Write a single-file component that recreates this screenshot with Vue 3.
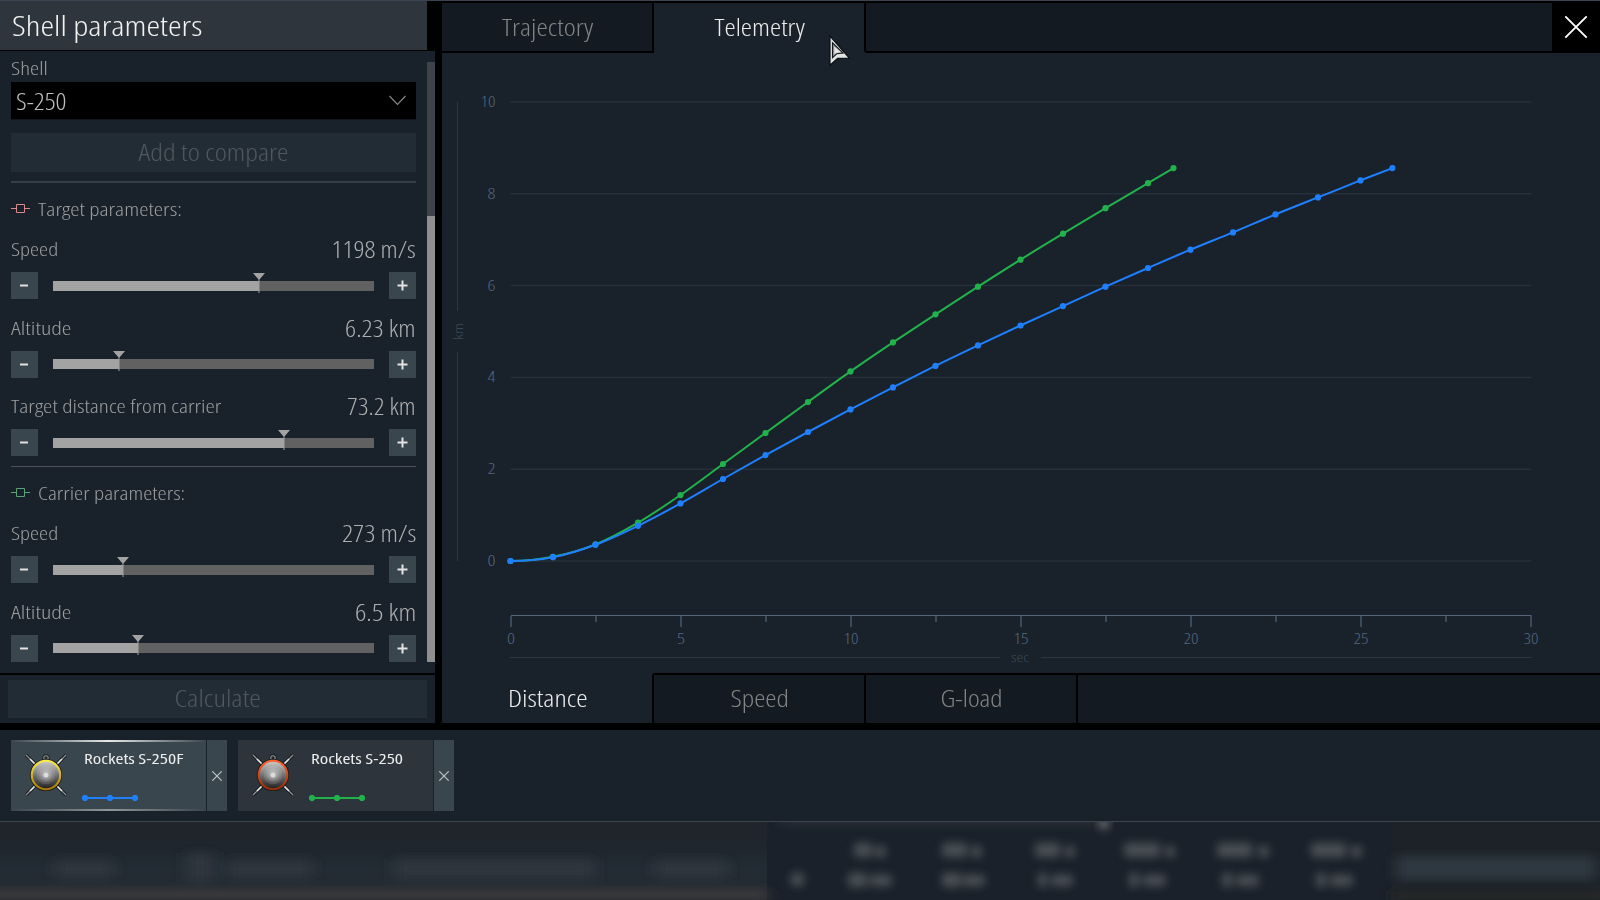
<template>
  <div class="screen">
    <div class="window">
      <aside class="panel">
        <h1 class="panel-title"><span v-fit="190" class="left">Shell parameters</span></h1>
        <div class="panel-body">
          <div class="form">
            <label class="label shell-label"><span v-fit="37" class="left">Shell</span></label>
            <div class="select">
              <span v-fit="50" class="left">S-250</span>
              <svg width="18" height="11" viewBox="0 0 18 11" fill="none" stroke="#858585" stroke-width="1.2">
                <path d="M.5 1l8 8.3L16.5 1" />
              </svg>
            </div>
            <button class="disabled-btn compare"><span v-fit="150">Add to compare</span></button>
            <section v-for="group in groups" :key="group.title" class="group">
              <div class="group-title label">
                <svg width="19" height="11" viewBox="0 0 19 11" fill="none" :stroke="group.color">
                  <path d="M0 5.5h5M14 5.5h5M5.5 1.5h8v8h-8z" />
                </svg>
                <span v-fit="group.width" class="left">{{ group.title }}</span>
              </div>
              <div v-for="p in group.params" :key="p.name" class="param">
                <div class="param-head">
                  <span v-fit="p.nameWidth" class="label left">{{ p.name }}</span>
                  <span v-fit="p.valueWidth" class="value right">{{ p.value }}</span>
                </div>
                <div class="slider">
                  <button class="step">
                    <svg width="27" height="27" stroke="#e2e2e2" stroke-width="2"><path d="M9 13.5h8" /></svg>
                  </button>
                  <div class="track">
                    <div class="fill" :style="{ width: p.pos + '%' }">
                      <svg class="thumb" width="12" height="21"><path d="M0 0h12L6.5 6.5V20h-1V6.5z" fill="#a3a3a3" /></svg>
                    </div>
                  </div>
                  <button class="step">
                    <svg width="27" height="27" stroke="#e2e2e2" stroke-width="2"><path d="M8.5 13.5h10M13.5 8.5v10" /></svg>
                  </button>
                </div>
              </div>
            </section>
          </div>
          <div class="scrollbar"><div class="scroll-thumb"></div></div>
        </div>
        <div class="panel-foot">
          <button class="disabled-btn calculate"><span v-fit="87">Calculate</span></button>
        </div>
      </aside>

      <main class="main">
        <nav class="tabs top">
          <div v-for="tab in topTabs" :key="tab.name" class="tab" :class="{ active: tab.active }">
            <span v-fit="tab.width">{{ tab.name }}</span>
          </div>
          <div class="tab-rest"></div>
          <button class="close">
            <svg width="24" height="24" stroke="#fff" stroke-width="1.9"><path d="M1.3 1.3l21.4 21.4M22.7 1.3L1.3 22.7" /></svg>
          </button>
        </nav>

        <svg class="chart" width="1158" height="620" viewBox="442 53 1158 620">
          <g class="grid">
            <path v-for="n in 6" :key="n" :d="`M510.5 ${yAt((n - 1) * 2)}H1531.5`" />
          </g>
          <g class="frame">
            <path d="M457.5 102V311M457.5 352V561" />
            <path d="M510 657.5H1000M1041 657.5H1531.5" />
          </g>
          <g class="axis-text">
            <text
              v-for="n in 6" :key="n" :x="n === 6 ? 480.5 : 487.5" :y="yAt((n - 1) * 2) + 5"
              :textLength="n === 6 ? 15 : 8" lengthAdjust="spacingAndGlyphs"
            >{{ (n - 1) * 2 }}</text>
            <text
              v-for="n in 7" :key="'x' + n" :x="xAt((n - 1) * 5) - (n > 2 ? 7.5 : 4)" y="644.3"
              :textLength="n > 2 ? 15 : 8" lengthAdjust="spacingAndGlyphs"
            >{{ (n - 1) * 5 }}</text>
          </g>
          <g class="unit-text">
            <text x="1011" y="662" textLength="18" lengthAdjust="spacingAndGlyphs">sec</text>
            <text transform="translate(463 340) rotate(-90)" textLength="17" lengthAdjust="spacingAndGlyphs">km</text>
          </g>
          <path class="ticks" :d="ticks" />
          <path class="axis" d="M511 615.5H1531.5" />
          <g v-for="s in series" :key="s.color" :fill="s.color">
            <path :d="curve(s.points)" fill="none" :stroke="s.color" stroke-width="2" />
            <circle v-for="(p, i) in s.points" :key="i" :cx="p[0]" :cy="p[1]" r="3.1" />
          </g>
        </svg>

        <nav class="tabs bottom">
          <div v-for="tab in bottomTabs" :key="tab.name" class="tab" :class="{ active: tab.active }">
            <span v-fit="tab.width">{{ tab.name }}</span>
          </div>
          <div class="tab-rest"></div>
        </nav>
      </main>
    </div>

    <footer class="shells">
      <div v-for="shell in shells" :key="shell.name" class="shell" :class="{ selected: shell.selected }">
        <div class="card">
          <svg class="rocket" width="42" height="44" viewBox="0 0 42 44">
            <defs>
              <linearGradient :id="shell.id + 'ring'" x2="0" y2="1">
                <stop offset="0" :stop-color="shell.ring[0]" />
                <stop offset="1" :stop-color="shell.ring[1]" />
              </linearGradient>
              <linearGradient :id="shell.id + 'nose'" x2="0" y2="1">
                <stop offset="0" stop-color="#c9c9c9" />
                <stop offset=".5" stop-color="#727272" />
                <stop offset="1" stop-color="#242424" />
              </linearGradient>
            </defs>
            <path d="M1 2l40 40M41 2L1 42" stroke="#151b20" stroke-width="3.2" />
            <path d="M1 2l40 40M41 2L1 42" stroke="#8d9293" stroke-width="1.3" />
            <path d="M5 6l6 6M31 32l6 6M37 6l-6 6M11 32l-6 6" stroke="#e8eaea" stroke-width="1.5" />
            <circle cx="21" cy="5" r="2.2" fill="none" stroke="#1b2024" stroke-width="3" />
            <circle cx="21" cy="5" r="2.2" fill="none" stroke="#8d9193" stroke-width="1.1" />
            <circle cx="21" cy="22" r="16.1" fill="#1b1d1e" />
            <circle cx="21" cy="22" r="15.3" :fill="`url(#${shell.id}ring)`" />
            <circle cx="21" cy="22" r="13.2" :fill="`url(#${shell.id}nose)`" />
            <circle cx="21" cy="22" r="9.3" fill="#fff" fill-opacity=".12" />
            <circle cx="21" cy="22" r="6.8" fill="#fff" fill-opacity=".14" />
            <circle cx="21" cy="22" r="4.7" fill="#fff" fill-opacity=".16" />
            <circle cx="21" cy="22" r="2.5" fill="#dcdcdc" />
          </svg>
          <div class="info">
            <span v-fit="shell.width" class="shell-name left">{{ shell.name }}</span>
            <svg width="58" height="8" :fill="shell.color" :stroke="shell.color">
              <path d="M4 4h50" stroke-width="2" />
              <circle v-for="x in [4, 29, 54]" :key="x" :cx="x" cy="4" r="2.7" />
            </svg>
          </div>
        </div>
        <button class="remove">
          <svg width="10" height="10" stroke="#c3c8ca" stroke-width="1.1"><path d="M.3.3l9.4 9.4M9.7.3L.3 9.7" /></svg>
        </button>
      </div>
    </footer>

    <svg class="backdrop" width="1600" height="78" viewBox="0 822 1600 78">
      <defs>
        <filter id="soft" x="-10%" y="-60%" width="120%" height="220%"><feGaussianBlur stdDeviation="7 5" /></filter>
        <filter id="soft-text" x="-10%" y="-60%" width="120%" height="220%"><feGaussianBlur stdDeviation="4" /></filter>
        <linearGradient id="haze" x2="0" y2="1">
          <stop offset="0" stop-color="#21242a" />
          <stop offset=".35" stop-color="#1f262e" />
          <stop offset=".6" stop-color="#232c34" />
          <stop offset="1" stop-color="#23282f" />
        </linearGradient>
      </defs>
      <rect y="822" width="1600" height="78" fill="#1a212a" />
      <rect y="822" width="767" height="78" fill="url(#haze)" />
      <rect x="1392" y="822" width="208" height="78" fill="#1c2228" />
      <g filter="url(#soft)">
        <rect x="-20" y="890" width="788" height="9" fill="#403e3e" />
        <path d="M55 860h58v18H55zM186 853h28v29h-28zM228 860h84v18h-84zM394 859h200v20H394zM655 860h72v18h-72z" fill="#2d363e" />
        <rect x="1396" y="856" width="200" height="24" fill="#2f3840" />
        <rect x="1390" y="893" width="220" height="6" fill="#2a2928" />
        <rect x="780" y="820" width="320" height="4" fill="#343b41" />
      </g>
      <path d="M1096 820h16l-8 11z" fill="#74777b" filter="url(#soft-text)" />
      <g class="blurred" filter="url(#soft-text)">
        <rect v-for="b in blurs" :key="b.join()" :x="b[0]" :y="b[1]" :width="b[2]" :height="b[3]" rx="3" />
      </g>
    </svg>

    <svg class="cursor" width="24" height="34" viewBox="0 0 24 34">
      <path d="M2 2v29.3l7.6-7L21.3 24z" fill="#e2e4e4" stroke="#0c0f12" stroke-width="1.2" />
      <path d="M4.5 8.8v15L8.6 19.8l6.6-.8z" fill="#8f9192" stroke="#14181b" stroke-width="1.1" />
      <path d="M6.3 12.5v8l2.2-1.6 4.6-.7z" fill="#e4e6e6" />
    </svg>
  </div>
</template>

<script setup>
// squeeze a label horizontally to the given width, the UI face is a condensed one
const vFit = {
  mounted(el, { value }) {
    el.style.transform = `scaleX(${value / el.offsetWidth})`;
  },
};

const groups = [
  {
    title: "Target parameters:",
    width: 144,
    color: "#d98a88",
    params: [
      { name: "Speed", nameWidth: 47, value: "1198 m/s", valueWidth: 84.5, pos: 64.2 },
      { name: "Altitude", nameWidth: 61, value: "6.23 km", valueWidth: 71, pos: 20.5 },
      { name: "Target distance from carrier", nameWidth: 211, value: "73.2 km", valueWidth: 69, pos: 71.9 },
    ],
  },
  {
    title: "Carrier parameters:",
    width: 147,
    color: "#5aa377",
    params: [
      { name: "Speed", nameWidth: 47, value: "273 m/s", valueWidth: 74, pos: 21.9 },
      { name: "Altitude", nameWidth: 61, value: "6.5 km", valueWidth: 61, pos: 26.5 },
    ],
  },
];

const topTabs = [
  { name: "Trajectory", width: 91 },
  { name: "Telemetry", width: 91, active: true },
];
const bottomTabs = [
  { name: "Distance", width: 79, active: true },
  { name: "Speed", width: 58 },
  { name: "G-load", width: 62 },
];

const shells = [
  { id: "a", name: "Rockets S-250F", width: 99, color: "#1f80ff", ring: ["#fff04a", "#a87500"], selected: true },
  { id: "b", name: "Rockets S-250", width: 92.5, color: "#22b24c", ring: ["#ff6430", "#962c08"] },
];

const xAt = (t) => 511 + t * 34;
const yAt = (km) => 561 - km * 45.9;

const ticks = Array.from({ length: 13 }, (_, i) => `M${xAt(i * 2.5)} 616v${i % 2 ? 6 : 11}`).join("");

const toPoints = (ys, lastX) =>
  ys.map((y, i) => [i === ys.length - 1 ? lastX : 510.5 + i * 42.5, y]);

const series = [
  {
    color: "#22b24c",
    points: toPoints(
      [561, 556.8, 544.4, 522.7, 495, 464, 433, 402, 371.4, 342.4, 314.3, 286.7, 259.7, 233.7, 208.2, 183.2, 168.1],
      1173.5
    ),
  },
  {
    color: "#1f80ff",
    points: toPoints(
      [
        561, 557.2, 544.7, 525.8, 503.4, 479, 455.1, 432, 409.4, 387.4, 365.9, 345.4, 325.5, 306.1, 286.7, 268,
        249.7, 232.4, 214.4, 197.4, 180.4, 168.1,
      ],
      1392.4
    ),
  },
];

// Catmull-Rom through the samples, mirrored at launch so the curve starts flat
function curve(pts) {
  let d = `M${pts[0]}`;
  for (let i = 0; i < pts.length - 1; i++) {
    const p1 = pts[i];
    const p2 = pts[i + 1];
    const p0 = pts[i - 1] || [2 * p1[0] - p2[0], p2[1]];
    const p3 = pts[i + 2] || p2;
    d += `C${p1[0] + (p2[0] - p0[0]) / 6} ${p1[1] + (p2[1] - p0[1]) / 6} `;
    d += `${p2[0] - (p3[0] - p1[0]) / 6} ${p2[1] - (p3[1] - p1[1]) / 6} ${p2}`;
  }
  return d;
}

const blurs = [
  [791, 873, 13, 13],
  [854, 843, 18, 14], [875, 846, 11, 11],
  [848, 873, 19, 14], [870, 875, 22, 11],
  [942, 843, 25, 14], [971, 846, 11, 11],
  [942, 873, 19, 14], [963, 875, 22, 11],
  [1035, 843, 25, 14], [1065, 846, 10, 11],
  [1038, 873, 9, 14], [1051, 875, 22, 11],
  [1124, 843, 36, 14], [1165, 846, 10, 11],
  [1129, 873, 10, 14], [1143, 875, 23, 11],
  [1217, 843, 35, 14], [1258, 846, 11, 11],
  [1222, 873, 10, 14], [1236, 875, 23, 11],
  [1311, 843, 35, 14], [1351, 846, 11, 11],
  [1316, 873, 10, 14], [1330, 875, 23, 11],
];
</script>

<style>
body {
  margin: 0;
  background: #000;
}
</style>

<style scoped>
.screen {
  position: relative;
  width: 1600px;
  height: 900px;
  overflow: hidden;
  background: #000202;
  font-family: "Open Sans", "Noto Sans", sans-serif;
  font-weight: 300;
  font-stretch: 75%;
  color: #a9abad;
}
svg {
  display: block;
  flex: none;
}
button {
  border: 0;
  padding: 0;
  font: inherit;
  color: inherit;
}
span {
  display: inline-block;
  white-space: nowrap;
}
.left {
  transform-origin: 0 50%;
}
.right {
  transform-origin: 100% 50%;
}
.window {
  display: flex;
  gap: 7px;
  height: 722px;
  border-top: 1px solid #3b4552;
}
.panel {
  width: 435px;
  display: flex;
  flex-direction: column;
}
.panel-title {
  box-sizing: border-box;
  width: 427px;
  height: 49px;
  margin: 0 0 1px;
  padding-left: 11.5px;
  background: #2f353c;
  color: #f2f2f2;
  font-size: 28px;
  font-weight: 300;
  line-height: 48px;
}
.panel-body {
  height: 622px;
  display: flex;
  justify-content: space-between;
  background: #19212a;
}
.form {
  width: 405px;
  padding-left: 11px;
}
.label {
  font-size: 17.5px;
  font-weight: 360;
  color: #9c9e9f;
}
.shell-label {
  display: block;
  height: 27px;
  padding-top: 4px;
  line-height: 27px;
}
.select {
  height: 37px;
  display: flex;
  align-items: center;
  justify-content: space-between;
  padding: 0 9px 0 5px;
  background: #000;
  color: #bfc0c0;
  font-size: 23px;
  border-bottom: 1px solid #10161b;
}
.disabled-btn {
  box-sizing: border-box;
  display: flex;
  align-items: center;
  justify-content: center;
  padding-bottom: 2px;
  background: #222c34;
  color: #50575f;
  font-size: 23px;
}
.compare {
  width: 405px;
  height: 39px;
  margin: 13px 0 9px;
}
.group {
  border-top: 2px solid #363e47;
}
.group + .group {
  border-top: 1px solid #4d5359;
}
.group-title {
  display: flex;
  align-items: center;
  gap: 8px;
  height: 51px;
  margin-bottom: 1px;
}
.param {
  margin-bottom: 14.5px;
}
.param:last-child {
  margin-bottom: 10px;
}
.param-head {
  display: flex;
  justify-content: space-between;
  align-items: center;
  height: 28px;
}
.value {
  font-size: 23px;
  color: #adafb1;
}
.slider {
  display: flex;
  align-items: center;
  justify-content: space-between;
  margin-top: 9px;
}
.step {
  width: 27px;
  height: 27px;
  background: #3a464e;
}
.track {
  width: 321px;
  height: 10px;
  background: #616161;
}
.fill {
  position: relative;
  height: 10px;
  background: #a3a3a3;
}
.thumb {
  position: absolute;
  right: -6px;
  top: -8px;
}
.scrollbar {
  width: 8px;
  height: 600px;
  margin-top: 11px;
  background: #3f4248;
}
.scroll-thumb {
  height: 446px;
  margin-top: 154px;
  background: #8f8f8f;
}
.panel-foot {
  height: 48px;
  margin-top: 2px;
  padding-left: 8px;
  display: flex;
  align-items: center;
  background: #19212a;
}
.calculate {
  width: 419px;
  height: 38px;
}
.main {
  width: 1158px;
  background: #19212a;
}
.tabs {
  display: flex;
  height: 50px;
  font-size: 23px;
  color: #838484;
}
.top {
  border-top: 2px solid #000;
}
.tab {
  box-sizing: border-box;
  width: 212px;
  display: flex;
  align-items: center;
  justify-content: center;
  padding-left: 1px;
  background: #141a21;
  border-right: 2px solid #000;
}
.tab-rest {
  flex: 1;
  background: #141a21;
}
.top .tab,
.top .tab-rest {
  border-bottom: 2px solid #000;
}
.bottom .tab,
.bottom .tab-rest {
  border-top: 2px solid #000;
}
.bottom .tab {
  padding-bottom: 2px;
}
.tabs .tab.active {
  background: #19212a;
  border-top-color: #19212a;
  border-bottom-color: #19212a;
  color: #ececec;
}
.close {
  width: 48px;
  display: flex;
  align-items: center;
  justify-content: center;
  padding-bottom: 3px;
  background: #000;
}
.grid {
  stroke: #25303a;
  stroke-width: 1.5;
}
.frame {
  stroke: #2a3640;
}
.axis {
  stroke: #566577;
}
.ticks {
  stroke: #3b4a5b;
  stroke-width: 2;
}
.axis-text {
  fill: #53667e;
  font-size: 14px;
  font-weight: 350;
}
.unit-text {
  fill: #3a4a5a;
  font-size: 13.5px;
  font-weight: 350;
}
.shells {
  display: flex;
  gap: 11px;
  height: 71px;
  margin-top: 7px;
  padding: 10px 11px;
  background: #19212a;
  border-bottom: 1px solid #3c444d;
}
.shell {
  display: flex;
  gap: 1px;
}
.card {
  position: relative;
  box-sizing: border-box;
  display: flex;
  width: 195px;
  height: 71px;
  padding: 13px 0 0 14px;
  background: #2e343b;
}
.selected .card {
  background: #3a464d;
}
.selected .card::before,
.selected .card::after {
  content: "";
  position: absolute;
  left: 0;
  top: 0;
  width: 100%;
  height: 2px;
  background: linear-gradient(90deg, transparent, #e6e8e8 50%, transparent);
}
.selected .card::after {
  top: auto;
  bottom: 0;
  opacity: 0.5;
}
.info {
  display: flex;
  flex-direction: column;
  align-items: flex-start;
  margin-left: 14px;
}
.shell-name {
  height: 18px;
  margin: -5px 0 29px 2.5px;
  line-height: 20px;
  font-size: 15px;
  font-weight: 370;
  color: #eceded;
}
.info svg {
  margin-top: -1px;
  margin-left: -0.5px;
}
.remove {
  width: 20px;
  display: flex;
  align-items: center;
  justify-content: center;
  background: #3a464e;
}
.blurred {
  fill: #484f55;
}
.cursor {
  position: absolute;
  left: 828px;
  top: 34px;
}
</style>
